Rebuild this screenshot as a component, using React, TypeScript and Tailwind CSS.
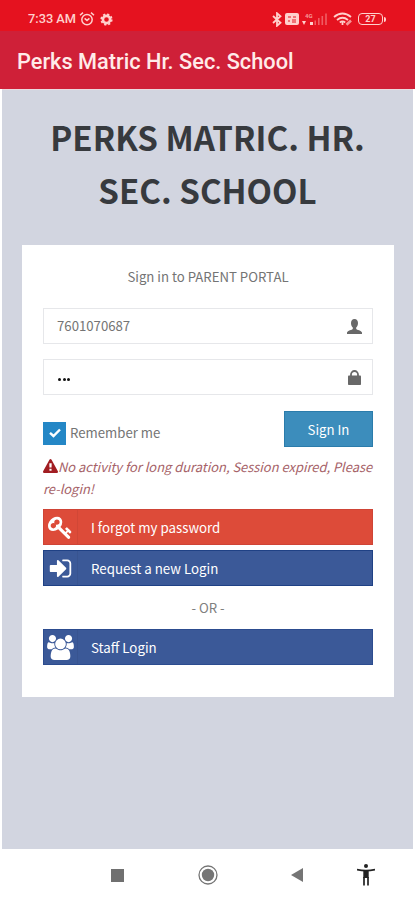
import type { ReactNode } from 'react';

const KEY_PATH =
  'M832 512q0-80-56-136t-136-56-136 56-56 136q0 42 19 83-41-19-83-19-80 0-136 56t-56 136 56 136 136 56 136-56 56-136q0-42-19-83 41 19 83 19 80 0 136-56t56-136zm851 704q0 17-49 66t-66 49q-9 0-28.5-16t-36.5-33-38.5-40-24.5-26l-96 96 220 220q28 28 28 68 0 42-39 81t-81 39q-40 0-68-28l-671-671q-176 131-365 131-163 0-265.5-102.5t-102.5-265.5q0-160 95-313t248-248 313-95q163 0 265.5 102.5t102.5 265.5q0 189-131 365l355 355 96-96q-3-3-26-24.5t-40-38.5-33-36.5-16-28.5q0-17 49-66t66-49q13 0 23 10 6 6 46 44.5t82 79.5 86.5 86 73 78 28.5 41z';
const SIGN_IN_PATH =
  'M1312 896q0 26-19 45l-544 544q-19 19-45 19t-45-19-19-45v-288h-448q-26 0-45-19t-19-45v-384q0-26 19-45t45-19h448v-288q0-26 19-45t45-19 45 19l544 544q19 19 19 45zm352-352v704q0 119-84.5 203.5t-203.5 84.5h-320q-13 0-22.5-9.5t-9.5-22.5q0-4-1-20t-.5-26.5 3-23.5 10-19.5 20.5-6.5h320q66 0 113-47t47-113v-704q0-66-47-113t-113-47h-312l-11.5-1-11.5-3-8-5.5-7-9-2-13.5q0-4-1-20t-.5-26.5 3-23.5 10-19.5 20.5-6.5h320q119 0 203.5 84.5t84.5 203.5z';
const USERS_PATH =
  'M593 896q-162 5-265 128h-134q-82 0-138-40.5t-56-118.5q0-353 124-353 6 0 43.5 21t97.5 42.5 119 21.5q67 0 133-23-5 37-5 66 0 139 81 256zm1071 637q0 120-73 189.5t-194 69.5h-874q-121 0-194-69.5t-73-189.5q0-53 3.5-103.5t14-109 26.5-108.5 43-97.5 62-81 85.5-53.5 111.5-20q10 0 43 21.5t73 48 107 48 135 21.5 135-21.5 107-48 73-48 43-21.5q61 0 111.5 20t85.5 53.5 62 81 43 97.5 26.5 108.5 14 109 3.5 103.5zm-1024-1277q0 106-75 181t-181 75-181-75-75-181 75-181 181-75 181 75 75 181zm704 384q0 159-112.5 271.5t-271.5 112.5-271.5-112.5-112.5-271.5 112.5-271.5 271.5-112.5 271.5 112.5 112.5 271.5zm576 225q0 78-56 118.5t-138 40.5h-134q-103-123-265-128 81-117 81-256 0-29-5-66 66 23 133 23 59 0 119-21.5t97.5-42.5 43.5-21q124 0 124 353zm-128-609q0 106-75 181t-181 75-181-75-75-181 75-181 181-75 181 75 75 181z';
const WARNING_PATH =
  'M1024 1375v-190q0-14-9.5-23.5t-22.5-9.5h-192q-13 0-22.5 9.5t-9.5 23.5v190q0 14 9.5 23.5t22.5 9.5h192q13 0 22.5-9.5t9.5-23.5zm-2-374l18-459q0-12-10-19-13-11-24-11h-220q-11 0-24 11-10 7-10 21l17 457q0 10 10 16.5t24 6.5h185q14 0 23.5-6.5t10.5-16.5zm-14-934l768 1408q35 63-2 126-17 29-46.5 46t-63.5 17h-1536q-34 0-63.5-17t-46.5-46q-37-63-2-126l768-1408q17-31 47-49t65-18 65 18 47 49z';

function StatusBar() {
  return (
    <div className="flex h-[31px] items-center justify-between bg-[#e5121f] pt-[7px] pr-[29px] pl-[28px] text-[#ffd0cc]">
      <div className="flex items-center">
        <span className="w-[49px] text-[12.8px] leading-4 font-medium whitespace-nowrap">7:33 AM</span>
        <svg className="ml-[2px] h-[16px] w-[16px]" viewBox="0 0 16 16" fill="none" stroke="currentColor" strokeWidth="1.5">
          <circle cx="8" cy="8.6" r="5.2" />
          <path d="M1 4.2 4 1.6M15 4.2 12 1.6M5.6 7.4 8 9.4l2.4-2" />
        </svg>
        <svg className="ml-[5px] h-[13px] w-[13px]" viewBox="0 0 13 13" fill="none" stroke="currentColor">
          <circle cx="6.5" cy="6.5" r="3.6" strokeWidth="2.6" />
          <circle cx="6.5" cy="6.5" r="5.3" strokeWidth="1.6" strokeDasharray="2.2 1.96" />
        </svg>
      </div>
      <div className="flex items-center">
        <svg className="h-[15px] w-[10px]" viewBox="0 0 10 15" fill="none" stroke="currentColor" strokeWidth="1.8">
          <path d="M1 4l7.5 6.8L5 13.8V1.2l3.5 3L1 11" />
        </svg>
        <svg className="ml-[3px] h-[12px] w-[14px]" viewBox="0 0 14 12">
          <rect width="14" height="12" rx="2" fill="currentColor" />
          <path d="M3 4h3M8 4h3M3 8h2M7 7h4M7 9h4" stroke="#e5121f" strokeWidth="1.2" />
        </svg>
        <svg className="ml-[3px] h-[14px] w-[26px]" viewBox="0 0 26 14" fill="currentColor">
          <text x="3" y="5.5" fontSize="6" fontWeight="700" opacity="0.7">4G</text>
          <path d="M0 9h4l-2 4zM8 10h3v3H8z" />
          <path d="M12.5 8.5H14V13h-1.5zM16 6h1.6v7H16zM19.5 4h1.6v9h-1.6zM23.2 1.5h1.6V13h-1.6z" opacity="0.4" />
        </svg>
        <svg className="ml-[5px] h-[14px] w-[20px]" viewBox="0 0 20 14" fill="none" stroke="currentColor" strokeWidth="1.8">
          <path d="M1 5q8.5-7 17 0M4 8q5.5-4.5 11 0M6.8 10.5q2.7-2.2 5.4 0" />
          <path d="M9.5 10v3" />
          <path d="M13.5 12.8 18 8.5" strokeWidth="2.6" opacity="0.7" />
        </svg>
        <div className="ml-[5px] flex items-center">
          <div className="flex h-[12px] w-[25px] items-center justify-center rounded-[4px] border-[1.5px] border-[#ffd0cc] text-[9px] leading-none font-bold">
            27
          </div>
          <div className="ml-px h-[5px] w-[2px] rounded-r bg-[#ffd0cc]" />
        </div>
      </div>
    </div>
  );
}

function Field({ children, icon }: { children: ReactNode; icon: ReactNode }) {
  return (
    <div className="flex h-[36px] items-center justify-between border border-[#e6e7ea] pr-[10px] pl-[13px]">
      {children}
      {icon}
    </div>
  );
}

function SocialButton({ label, icon, className }: { label: string; icon: ReactNode; className: string }) {
  return (
    <button className={`flex h-[36px] w-full items-center border text-left text-[13.3px] text-white ${className}`}>
      <span className="flex h-full w-[34px] items-center justify-center border-r border-black/5">{icon}</span>
      <span className="pt-px pl-[13px] leading-5">{label}</span>
    </button>
  );
}

function NavBar() {
  return (
    <div className="grid h-[51px] grid-cols-[235px_122px_1fr] items-center bg-white pt-px text-[#757575]">
      <div className="flex items-center justify-between pr-[17px] pl-[111px]">
        <div className="h-[13px] w-[13px] bg-[#707070]" />
        <svg className="h-[20px] w-[20px]" viewBox="0 0 20 20">
          <circle cx="10" cy="10" r="9" fill="none" stroke="currentColor" strokeWidth="1.3" />
          <circle cx="10" cy="10" r="6.2" fill="currentColor" />
        </svg>
      </div>
      <svg className="ml-[56px] h-[14px] w-[12px]" viewBox="0 0 12 14">
        <path d="M0 7 12 0v14z" fill="currentColor" />
      </svg>
      <svg className="h-[22px] w-[18px]" viewBox="0 0 18 22" fill="none" stroke="#222">
        <circle cx="9" cy="2" r="2" fill="#222" stroke="none" />
        <path d="M0 5.6q9 2 18 0" strokeWidth="1.8" />
        <path d="M6.3 6h5.4v8H6.3z" fill="#222" stroke="none" />
        <path d="M7 13v8.5M11 13v8.5" strokeWidth="1.7" />
      </svg>
    </div>
  );
}

function App() {
  return (
    <div className="flex h-[900px] w-[415px] flex-col overflow-hidden bg-white font-[Roboto,sans-serif]">
      <StatusBar />

      <header className="flex h-[58px] items-center bg-[#cf2038] pt-[3px] pl-[17px]">
        <h1 className="text-[21.75px] leading-7 font-medium whitespace-nowrap text-[#ffebe9]">Perks Matric Hr. Sec. School</h1>
      </header>

      <main className="mx-[2px] flex-1 border-t border-[#ead9df] bg-[#d2d5e0] px-[20px] pt-[21px] font-['Noto_Sans_CJK_SC',sans-serif]">
        <h2 className="text-center text-[33.1px] leading-[53px] font-bold whitespace-nowrap text-[#373a3e]">
          PERKS MATRIC. HR.
          <br />
          SEC. SCHOOL
        </h2>

        <section className="mt-[28px] h-[452px] w-[372px] bg-white px-[21px] pt-[21px]">
          <p className="text-center text-[13.2px] leading-[21px] text-[#747474]">Sign in to PARENT PORTAL</p>

          <div className="mt-[21px]">
            <Field
              icon={
                <svg className="h-[15px] w-[15px]" viewBox="0 0 15 15" fill="#686868">
                  <path d="M7.5 0C5.1 0 4 1.8 4 4c0 2.3.8 3.6 1.8 4.6v1.3C5.3 10.8.5 11.4 0 13.6V15h15v-1.4c-.5-2.2-5.3-2.8-5.8-3.7V8.6C10.2 7.6 11 6.3 11 4c0-2.2-1.1-4-3.5-4z" />
                </svg>
              }
            >
              <span className="text-[13.2px] leading-5 text-[#747474]">7601070687</span>
            </Field>
          </div>
          <div className="mt-[15px]">
            <Field
              icon={
                <svg className="mr-px h-[15px] w-[13px]" viewBox="0 0 13 15" fill="#686868">
                  <path d="M3 7V4.5a3.5 3.5 0 0 1 7 0V7" fill="none" stroke="#686868" strokeWidth="1.8" />
                  <rect y="5.5" width="13" height="9.5" rx="0.8" />
                </svg>
              }
            >
              <span className="flex gap-[1.5px] pt-[4px] pl-px">
                <i className="h-[3px] w-[3px] rounded-full bg-[#111]" />
                <i className="h-[3px] w-[3px] rounded-full bg-[#111]" />
                <i className="h-[3px] w-[3px] rounded-full bg-[#111]" />
              </span>
            </Field>
          </div>

          <div className="mt-[16px] flex justify-between">
            <div className="flex h-[23px] items-center pt-[21px]">
              <span className="flex h-[23px] w-[23px] items-center justify-center bg-[#2487c6]">
                <svg className="h-[10px] w-[12px]" viewBox="0 0 12 10" fill="none" stroke="#fff" strokeWidth="2.4">
                  <path d="M1 4.8 4.5 8 11 1.5" />
                </svg>
              </span>
              <span className="ml-[4px] text-[13.2px] leading-5 text-[#747474]">Remember me</span>
            </div>
            <button className="h-[36px] w-[89px] border border-[#2b7cab] bg-[#3c8dbc] pt-[2px] text-[13.2px] text-white">Sign In</button>
          </div>

          <p className="mt-[9px] text-[12.92px] leading-[21.5px] whitespace-nowrap text-[#a66268] italic">
            <svg className="inline h-[15px] w-[15px] align-[-2px]" viewBox="0 0 1792 1792" fill="#a11d22">
              <path d={WARNING_PATH} />
            </svg>
            No activity for long duration, Session expired, Please
            <br />
            re-login!
          </p>

          <div className="mt-[10px] flex flex-col gap-[5px]">
            <SocialButton
              label="I forgot my password"
              className="border-[#cf4436] bg-[#dd4b39]"
              icon={
                <svg className="h-[25px] w-[25px]" viewBox="0 0 1792 1792" fill="#fff">
                  <path d={KEY_PATH} />
                </svg>
              }
            />
            <SocialButton
              label="Request a new Login"
              className="border-[#1f4185] bg-[#3b5998]"
              icon={
                <svg className="h-[25px] w-[25px]" viewBox="0 0 1792 1792" fill="#fff">
                  <path d={SIGN_IN_PATH} />
                </svg>
              }
            />
          </div>
          <p className="my-[11px] text-center text-[13.2px] leading-[21px] text-[#808080]">- OR -</p>
          <SocialButton
            label="Staff Login"
            className="border-[#2c4c8f] bg-[#3b5998]"
            icon={
              <svg className="h-[25px] w-[27px]" viewBox="0 0 1920 1792" fill="#fff">
                <path d={USERS_PATH} />
              </svg>
            }
          />
        </section>
      </main>

      <NavBar />
    </div>
  );
}

export default App;
